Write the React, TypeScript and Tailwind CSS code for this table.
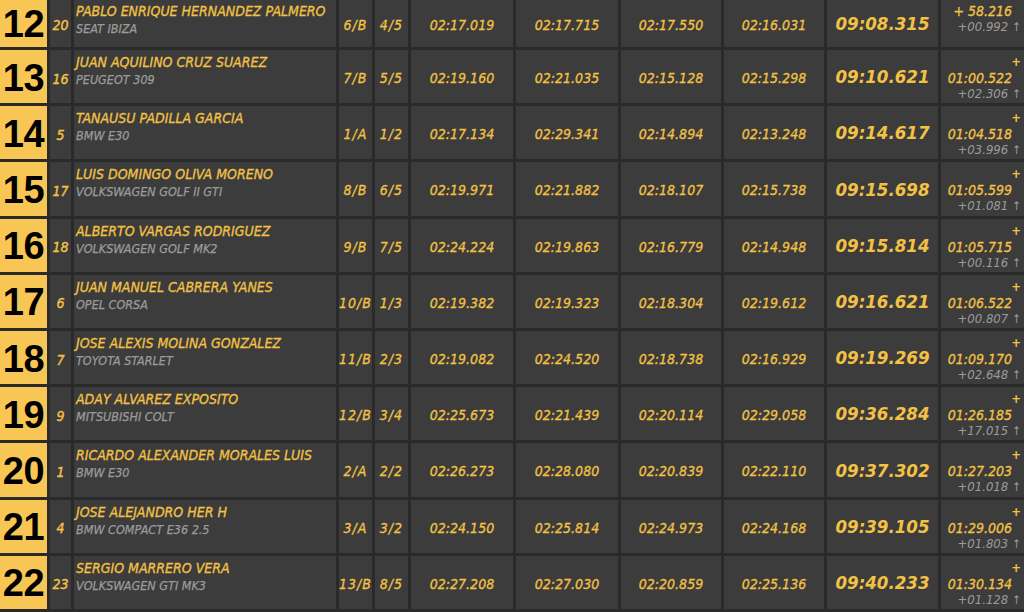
import React from 'react';

type Row = {
  pos: number;
  num: number;
  driver: string;
  car: string;
  cls: string;
  clsPos: string;
  splits: string[];
  total: string;
  gap: string;
  diff: string;
};

const rows: Row[] = [
  { pos: 12, num: 20, driver: 'PABLO ENRIQUE HERNANDEZ PALMERO', car: 'SEAT IBIZA', cls: '6/B', clsPos: '4/5', splits: ['02:17.019', '02:17.715', '02:17.550', '02:16.031'], total: '09:08.315', gap: '58.216', diff: '+00.992' },
  { pos: 13, num: 16, driver: 'JUAN AQUILINO CRUZ SUAREZ', car: 'PEUGEOT 309', cls: '7/B', clsPos: '5/5', splits: ['02:19.160', '02:21.035', '02:15.128', '02:15.298'], total: '09:10.621', gap: '01:00.522', diff: '+02.306' },
  { pos: 14, num: 5, driver: 'TANAUSU PADILLA GARCIA', car: 'BMW E30', cls: '1/A', clsPos: '1/2', splits: ['02:17.134', '02:29.341', '02:14.894', '02:13.248'], total: '09:14.617', gap: '01:04.518', diff: '+03.996' },
  { pos: 15, num: 17, driver: 'LUIS DOMINGO OLIVA MORENO', car: 'VOLKSWAGEN GOLF II GTI', cls: '8/B', clsPos: '6/5', splits: ['02:19.971', '02:21.882', '02:18.107', '02:15.738'], total: '09:15.698', gap: '01:05.599', diff: '+01.081' },
  { pos: 16, num: 18, driver: 'ALBERTO VARGAS RODRIGUEZ', car: 'VOLKSWAGEN GOLF MK2', cls: '9/B', clsPos: '7/5', splits: ['02:24.224', '02:19.863', '02:16.779', '02:14.948'], total: '09:15.814', gap: '01:05.715', diff: '+00.116' },
  { pos: 17, num: 6, driver: 'JUAN MANUEL CABRERA YANES', car: 'OPEL CORSA', cls: '10/B', clsPos: '1/3', splits: ['02:19.382', '02:19.323', '02:18.304', '02:19.612'], total: '09:16.621', gap: '01:06.522', diff: '+00.807' },
  { pos: 18, num: 7, driver: 'JOSE ALEXIS MOLINA GONZALEZ', car: 'TOYOTA STARLET', cls: '11/B', clsPos: '2/3', splits: ['02:19.082', '02:24.520', '02:18.738', '02:16.929'], total: '09:19.269', gap: '01:09.170', diff: '+02.648' },
  { pos: 19, num: 9, driver: 'ADAY ALVAREZ EXPOSITO', car: 'MITSUBISHI COLT', cls: '12/B', clsPos: '3/4', splits: ['02:25.673', '02:21.439', '02:20.114', '02:29.058'], total: '09:36.284', gap: '01:26.185', diff: '+17.015' },
  { pos: 20, num: 1, driver: 'RICARDO ALEXANDER MORALES LUIS', car: 'BMW E30', cls: '2/A', clsPos: '2/2', splits: ['02:26.273', '02:28.080', '02:20.839', '02:22.110'], total: '09:37.302', gap: '01:27.203', diff: '+01.018' },
  { pos: 21, num: 4, driver: 'JOSE ALEJANDRO HER H', car: 'BMW COMPACT E36 2.5', cls: '3/A', clsPos: '3/2', splits: ['02:24.150', '02:25.814', '02:24.973', '02:24.168'], total: '09:39.105', gap: '01:29.006', diff: '+01.803' },
  { pos: 22, num: 23, driver: 'SERGIO MARRERO VERA', car: 'VOLKSWAGEN GTI MK3', cls: '13/B', clsPos: '8/5', splits: ['02:27.208', '02:27.030', '02:20.859', '02:25.136'], total: '09:40.233', gap: '01:30.134', diff: '+01.128' },
];

const font = "font-['DejaVu_Sans',sans-serif] font-stretch-condensed";
const yellow = 'text-[#f3c144]';

function Cell({ children, className = '' }: { children?: React.ReactNode; className?: string }) {
  return <div className={`bg-[#3c3c3c] ${className}`}>{children}</div>;
}

function ResultRow({ r }: { r: Row }) {
  const wraps = r.gap.includes(':');
  return (
    <>
      <div className="bg-[#f8c655] flex items-center justify-center pt-[2px]">
        <span className="font-['Liberation_Sans',sans-serif] font-bold text-[38px] leading-none text-black tracking-[-0.5px]">
          {r.pos}
        </span>
      </div>
      <Cell className="flex items-center justify-center pt-[5px]">
        <span className={`italic text-[14px] ${yellow} [-webkit-text-stroke:0.4px_#f3c144]`}>{r.num}</span>
      </Cell>
      <Cell className="pl-[2px] pt-[4px] leading-[17px] italic">
        <div className={`text-[14px] ${yellow} whitespace-nowrap [-webkit-text-stroke:0.3px_#f3c144]`}>{r.driver}</div>
        <div className="text-[12.5px] text-[#9b9b9b] whitespace-nowrap [-webkit-text-stroke:0.25px_#9b9b9b]">{r.car}</div>
      </Cell>
      <Cell className="flex items-center justify-center pt-[4px]">
        <span className={`italic text-[14px] ${yellow} tracking-[1px] [-webkit-text-stroke:0.3px_#f3c144]`}>{r.cls}</span>
      </Cell>
      <Cell className="flex items-center justify-center pt-[4px]">
        <span className={`italic text-[14px] ${yellow} tracking-[1px] [-webkit-text-stroke:0.3px_#f3c144]`}>{r.clsPos}</span>
      </Cell>
      {r.splits.map((s, i) => (
        <Cell key={i} className="flex items-center justify-center pt-[4px]">
          <span className={`italic text-[14px] ${yellow} [-webkit-text-stroke:0.3px_#f3c144]`}>{s}</span>
        </Cell>
      ))}
      <Cell className="flex items-center justify-center pt-[1px]">
        <span className={`italic font-bold text-[18.5px] ${yellow}`}>{r.total}</span>
      </Cell>
      <Cell className="flex flex-col items-end justify-start pt-[4px] pr-[4px] italic leading-[16px]">
        {wraps ? (
          <>
            <span className={`font-bold text-[13px] ${yellow}`}>+</span>
            <span className={`text-[14px] ${yellow} pr-[9px] [-webkit-text-stroke:0.3px_#f3c144]`}>{r.gap}</span>
          </>
        ) : (
          <span className={`text-[14px] ${yellow} pr-[9px] [-webkit-text-stroke:0.3px_#f3c144]`}>+ {r.gap}</span>
        )}
        <span className="text-[13px] text-[#9b9b9b] whitespace-nowrap">
          {r.diff} <span className="not-italic text-[12px]">↑</span>
        </span>
      </Cell>
    </>
  );
}

export default function App() {
  return (
    <div className={`w-[1024px] h-[612px] overflow-hidden bg-[#2a2a2a] ${font}`}>
      <div className="-mt-[1px] grid grid-cols-[47px_21px_262px_33px_33px_102px_102px_100px_100px_111px_84px] grid-rows-[48px_repeat(10,53.2px)] gap-[3px]">
        {rows.map((r) => (
          <ResultRow key={r.pos} r={r} />
        ))}
      </div>
    </div>
  );
}
